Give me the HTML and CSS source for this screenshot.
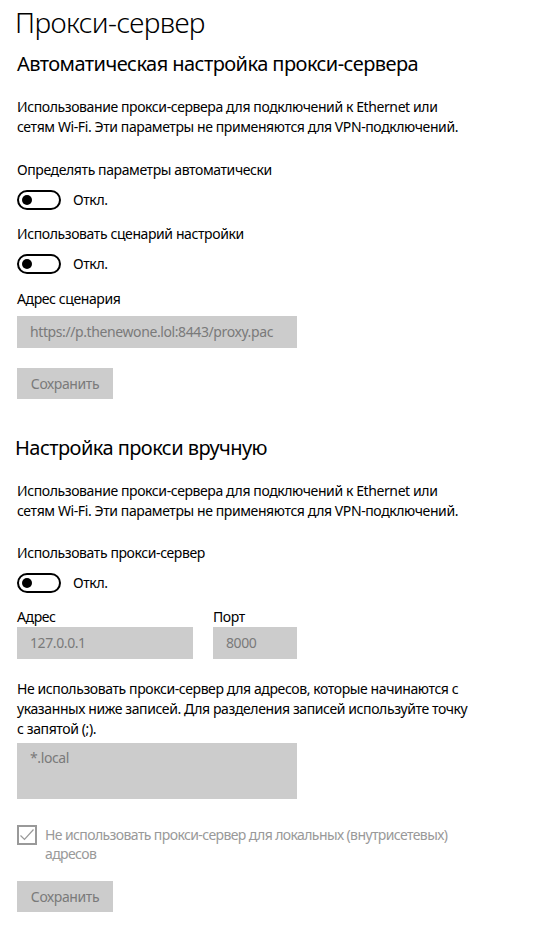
FILE: index.html
```html
<!DOCTYPE html>
<html lang="ru">
<head>
<meta charset="utf-8">
<title>Прокси-сервер</title>
<link rel="stylesheet" href="styles.css">
</head>
<body>
<main class="page">
  <h1 class="title">Прокси-сервер</h1>

  <section class="section">
    <h2 class="subtitle">Автоматическая настройка прокси-сервера</h2>
    <p class="desc">Использование прокси-сервера для подключений к Ethernet или<br>сетям Wi-Fi. Эти параметры не применяются для VPN-подключений.</p>

    <div class="label label-first">Определять параметры автоматически</div>
    <div class="toggle-row">
      <span class="toggle"><span class="knob"></span></span>
      <span class="toggle-text">Откл.</span>
    </div>

    <div class="label">Использовать сценарий настройки</div>
    <div class="toggle-row">
      <span class="toggle"><span class="knob"></span></span>
      <span class="toggle-text">Откл.</span>
    </div>

    <div class="label label-script">Адрес сценария</div>
    <div class="field field-wide field-script">https://p.thenewone.lol:8443/proxy.pac</div>

    <div class="button button-first">Сохранить</div>
  </section>

  <section class="section section-manual">
    <h2 class="subtitle">Настройка прокси вручную</h2>
    <p class="desc">Использование прокси-сервера для подключений к Ethernet или<br>сетям Wi-Fi. Эти параметры не применяются для VPN-подключений.</p>

    <div class="label label-first">Использовать прокси-сервер</div>
    <div class="toggle-row">
      <span class="toggle"><span class="knob"></span></span>
      <span class="toggle-text">Откл.</span>
    </div>

    <div class="addr-row">
      <div class="addr-col">
        <div class="label-tight">Адрес</div>
        <div class="field field-addr">127.0.0.1</div>
      </div>
      <div class="addr-col">
        <div class="label-tight">Порт</div>
        <div class="field field-port">8000</div>
      </div>
    </div>

    <p class="desc desc-exceptions">Не использовать прокси-сервер для адресов, которые начинаются с<br>указанных ниже записей. Для разделения записей используйте точку<br>с запятой (;).</p>

    <div class="field field-wide field-area">*.local</div>

    <div class="check-row">
      <span class="checkbox">
        <svg width="16" height="16" viewBox="0 0 16 16" aria-hidden="true"><path d="M1.5 8.5 L5.5 12.5 L14.5 2.5" fill="none" stroke="#999999" stroke-width="1.2"/></svg>
      </span>
      <span class="check-text">Не использовать прокси-сервер для локальных (внутрисетевых)<br>адресов</span>
    </div>

    <div class="button button-last">Сохранить</div>
  </section>
</main>
</body>
</html>
```

FILE: styles.css
```css
* { box-sizing: border-box; }

html, body {
  margin: 0;
  padding: 0;
  background: #ffffff;
}

body {
  font-family: "Noto Sans", "Open Sans", "Liberation Sans", sans-serif;
  color: #000000;
  font-size: 14px;
  line-height: 20px;
}

.page {
  padding: 4px 0 0 17px;
  display: flex;
  flex-direction: column;
  align-items: flex-start;
}

.title {
  margin: 0 0 0 -2px;
  font-size: 28px;
  line-height: 36px;
  font-weight: 300;
  letter-spacing: -0.6px;
}

.section {
  display: flex;
  flex-direction: column;
  align-items: flex-start;
}

.subtitle {
  margin: 10px 0 0 0;
  font-size: 20px;
  line-height: 28px;
  font-weight: 400;
  letter-spacing: -0.55px;
}

.section-manual .subtitle {
  margin-left: -2px;
  margin-top: 35px;
}

.desc {
  margin: 19px 0 0 0;
  white-space: nowrap;
  font-size: 14px;
  line-height: 20px;
  letter-spacing: -0.4px;
}

.label {
  margin-top: 14px;
  letter-spacing: -0.4px;
}

.label-first { margin-top: 23px; }
.section-manual .label-first { margin-top: 22px; }
.label-script { margin-top: 15px; }

.toggle-row {
  margin-top: 10px;
  display: flex;
  align-items: center;
  gap: 12px;
  height: 20px;
}

.toggle {
  width: 44px;
  height: 20px;
  border: 2px solid #000000;
  border-radius: 10px;
  display: flex;
  align-items: center;
  padding-left: 3px;
}

.knob {
  width: 10px;
  height: 10px;
  border-radius: 50%;
  background: #000000;
}

.toggle-text {
  letter-spacing: -0.4px;
}

.field {
  background: #cccccc;
  color: #7a7a7a;
  height: 32px;
  line-height: 32px;
  padding-left: 13px;
  white-space: nowrap;
  letter-spacing: -0.4px;
}

.field-wide { width: 280px; }
.field-script { margin-top: 7px; }

.button {
  width: 96px;
  height: 31px;
  background: #cccccc;
  color: #7a7a7a;
  display: flex;
  align-items: center;
  justify-content: center;
  letter-spacing: -0.4px;
}

.button-first { margin-top: 20px; }
.button-last { margin-top: 18px; }

.addr-row {
  margin-top: 14px;
  display: flex;
  gap: 20px;
}

.addr-col {
  display: flex;
  flex-direction: column;
}

.label-tight {
  line-height: 20px;
  letter-spacing: -0.4px;
}

.field-addr { width: 176px; }
.field-port { width: 84px; }

.desc-exceptions { margin-top: 20px; }

.field-area {
  margin-top: 4px;
  height: 56px;
  line-height: 20px;
  padding-top: 5px;
}

.check-row {
  margin-top: 26px;
  display: flex;
  align-items: flex-start;
  gap: 8px;
}

.checkbox {
  width: 20px;
  height: 20px;
  border: 2px solid #999999;
  display: flex;
  align-items: center;
  justify-content: center;
  flex: none;
}

.check-text {
  color: #999999;
  line-height: 19px;
  letter-spacing: -0.6px;
  white-space: nowrap;
}
```
